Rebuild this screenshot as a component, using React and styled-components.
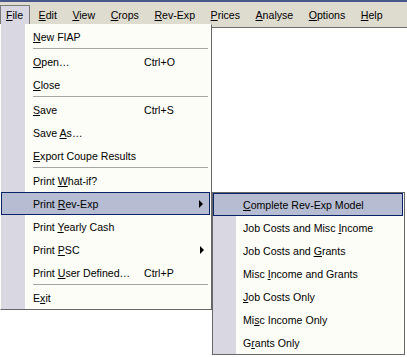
import styled, { createGlobalStyle } from "styled-components"

const GlobalStyle = createGlobalStyle`
  body {
    margin: 0;
    background: #ffffff;
    font-family: "Liberation Sans", Arial, sans-serif;
    font-size: 10.6px;
    color: #000000;
  }
`

const Window = styled.div`
  width: 407px;
  height: 357px;
  overflow: hidden;
  display: flex;
  flex-direction: column;
  background: #dedbcf;
`

const MenuBar = styled.div`
  height: 22px;
  border-top: 2px solid #47578a;
  display: flex;
  align-items: flex-end;
  gap: 2.5px;
`

const BarItem = styled.div`
  height: 19px;
  line-height: 19px;
  padding: 0 6px 0 5px;
  box-sizing: border-box;
  white-space: nowrap;
  border: 1px solid ${p => (p.$open ? "#7a7a7a" : "transparent")};
  border-bottom: none;
  background: ${p => (p.$open ? "#d8d7e2" : "transparent")};
`

const Workspace = styled.div`
  position: relative;
  flex: 1;
  display: flex;
  flex-direction: column;
`

const Client = styled.div`
  flex: 1;
  margin-top: 3px;
  border-top: 1px solid #6d6d6d;
  background: #ffffff;
`

const Dropdown = styled.div`
  position: absolute;
  left: ${p => p.$left}px;
  top: ${p => p.$top}px;
  width: ${p => p.$width}px;
  box-sizing: border-box;
  border: 1px solid #666666;
  border-left-color: ${p => (p.$flush ? "transparent" : "#666666")};
  border-top-color: ${p => (p.$flush ? "transparent" : "#666666")};
  background: linear-gradient(
    to right,
    #d8d7e2 0,
    #d8d7e2 ${p => (p.$flush ? 24 : 23)}px,
    #fdfdf7 ${p => (p.$flush ? 24 : 23)}px
  );
`

const Item = styled.div`
  height: 23px;
  box-sizing: border-box;
  display: flex;
  align-items: center;
  padding-left: ${p => p.$indent}px;
  padding-right: 7px;
  white-space: nowrap;
  ${p =>
    p.$active &&
    `
    background: #b6bdd2;
    border: 1px solid #0a246a;
    margin: 0 1px 0 0;
    padding-left: ${p.$indent - 1}px;
    padding-right: 6px;
  `}
`

const Label = styled.span`
  width: ${p => (p.$fixed ? "111px" : "auto")};
`

const Shortcut = styled.span``

const Arrow = styled.span`
  margin-left: auto;
  width: 0;
  height: 0;
  border-left: 4px solid #000000;
  border-top: 4px solid transparent;
  border-bottom: 4px solid transparent;
`

const Separator = styled.div`
  height: 2px;
  margin-left: 32px;
  margin-right: 3px;
  border-top: 1px solid #a6a6a6;
  box-sizing: border-box;
`

const fileMenu = [
  { text: "New FIAP", key: 0 },
  "sep",
  { text: "Open…", key: 0, shortcut: "Ctrl+O" },
  { text: "Close", key: 0 },
  "sep",
  { text: "Save", key: 0, shortcut: "Ctrl+S" },
  { text: "Save As…", key: 5 },
  { text: "Export Coupe Results", key: 0 },
  "sep",
  { text: "Print What-if?", key: 6 },
  { text: "Print Rev-Exp", key: 6, sub: true, active: true },
  { text: "Print Yearly Cash", key: 6 },
  { text: "Print PSC", key: 6, sub: true },
  { text: "Print User Defined…", key: 6, shortcut: "Ctrl+P" },
  "sep",
  { text: "Exit", key: 1 },
]

const revExpMenu = [
  { text: "Complete Rev-Exp Model", key: 0, active: true },
  { text: "Job Costs and Misc Income", key: 19 },
  { text: "Job Costs and Grants", key: 14 },
  { text: "Misc Income and Grants", key: 5 },
  { text: "Job Costs Only", key: 0 },
  { text: "Misc Income Only", key: 2 },
  { text: "Grants Only", key: 1 },
]

const barItems = [
  "File",
  "Edit",
  "View",
  "Crops",
  "Rev-Exp",
  "Prices",
  "Analyse",
  "Options",
  "Help",
]

function Access({ text, at }) {
  return (
    <>
      {text.slice(0, at)}
      <u>{text[at]}</u>
      {text.slice(at + 1)}
    </>
  )
}

function MenuList({ items, indent }) {
  return items.map((it, i) =>
    it === "sep" ? (
      <Separator key={i} />
    ) : (
      <Item key={i} $indent={indent} $active={it.active}>
        <Label $fixed={!!it.shortcut}>
          <Access text={it.text} at={it.key} />
        </Label>
        {it.shortcut && <Shortcut>{it.shortcut}</Shortcut>}
        {it.sub && <Arrow />}
      </Item>
    )
  )
}

export default function App() {
  return (
    <>
      <GlobalStyle />
      <Window>
        <MenuBar>
          {barItems.map((name, i) => (
            <BarItem key={name} $open={i === 0}>
              <Access text={name} at={0} />
            </BarItem>
          ))}
        </MenuBar>
        <Workspace>
          <Client />
          <Dropdown $left={0} $top={0} $width={212} $flush>
            <MenuList items={fileMenu} indent={32} />
          </Dropdown>
          <Dropdown $left={212} $top={168} $width={193}>
            <MenuList items={revExpMenu} indent={30} />
          </Dropdown>
        </Workspace>
      </Window>
    </>
  )
}
